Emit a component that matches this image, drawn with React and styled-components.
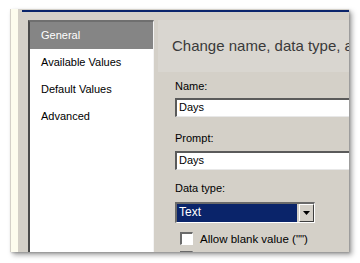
import styled, { createGlobalStyle } from 'styled-components';

const Global = createGlobalStyle`
  html, body {
    margin: 0;
    padding: 0;
    background: #ffffff;
  }
  body {
    font-family: "Liberation Sans", Arial, sans-serif;
    font-size: 11px;
  }
`;

function App() {
  return (
    <>
      <Global />
      <Page>
        <Shot>
          <Edge />
          <Strip />
          <Gap />
          <Dialog>
            <TitleLine />
            <Body>
              <List>
                <Item $selected>General</Item>
                <Item>Available Values</Item>
                <Item>Default Values</Item>
                <Item>Advanced</Item>
              </List>
              <Panel>
                <Header>Change name, data type, and other options.</Header>
                <Label $top={8}>Name:</Label>
                <Input $top={5}>Days</Input>
                <Label $top={15}>Prompt:</Label>
                <Input $top={6}>Days</Input>
                <Label $top={12}>Data type:</Label>
                <Select>
                  <SelectValue>Text</SelectValue>
                  <DropButton>
                    <svg width="7" height="4" viewBox="0 0 7 4">
                      <path d="M0 0h7L3.5 4z" fill="#000" />
                    </svg>
                  </DropButton>
                </Select>
                <Check $top={9}>
                  <Box />
                  <span>Allow blank value ("")</span>
                </Check>
                <Check $top={6}>
                  <Box />
                  <span>Allow null value</span>
                </Check>
              </Panel>
            </Body>
          </Dialog>
        </Shot>
      </Page>
    </>
  );
}

const Page = styled.div`
  padding: 9px 0 0 10px;
  width: 360px;
  height: 263px;
  box-sizing: border-box;
`;

const Shot = styled.div`
  display: flex;
  width: 339px;
  height: 243px;
  background: #d4d0c8;
  overflow: hidden;
  box-shadow: 3px 3px 5px rgba(0, 0, 0, 0.35), 1px 1px 2px rgba(0, 0, 0, 0.2);
`;

const Edge = styled.div`
  width: 1px;
  background: #d4d0c8;
`;

const Strip = styled.div`
  width: 7px;
  background: #fdfcee;
`;

const Gap = styled.div`
  width: 4px;
  background: #d4d0c8;
`;

const Dialog = styled.div`
  flex: 1;
  display: flex;
  flex-direction: column;
  min-width: 0;
`;

const TitleLine = styled.div`
  height: 2px;
  margin-top: 1px;
  background: #0a246a;
`;

const Body = styled.div`
  flex: 1;
  display: flex;
  padding: 8px 0 0 6px;
  min-height: 0;
`;

const List = styled.div`
  width: 123px;
  flex-shrink: 0;
  background: #ffffff;
  border-top: 2px solid #6f6f6f;
  border-left: 2px solid #4a4a4a;
  border-right: 1px solid #f4f4f4;
`;

const Item = styled.div`
  height: 27px;
  line-height: 26px;
  padding-left: 11px;
  color: ${(p) => (p.$selected ? '#ffffff' : '#000000')};
  background: ${(p) => (p.$selected ? '#858585' : 'transparent')};
  white-space: nowrap;
`;

const Panel = styled.div`
  flex: 1;
  display: flex;
  flex-direction: column;
  padding-left: 4px;
  min-width: 0;
  overflow: hidden;
`;

const Header = styled.div`
  height: 55px;
  line-height: 52px;
  padding-left: 14px;
  background: #d9d6d0;
  font-size: 15px;
  color: #3a3a3a;
  white-space: nowrap;
`;

const Label = styled.div`
  margin: ${(p) => p.$top}px 0 0 17px;
  line-height: 13px;
  color: #000000;
`;

const Input = styled.div`
  margin: ${(p) => p.$top}px 0 0 17px;
  width: 220px;
  height: 19px;
  box-sizing: border-box;
  padding-left: 2px;
  line-height: 15px;
  background: #ffffff;
  border-top: 2px solid #5a5a5a;
  border-left: 2px solid #5a5a5a;
  border-bottom: 1px solid #e8e8e8;
  color: #000000;
  flex-shrink: 0;
`;

const Select = styled.div`
  margin: 7px 0 0 17px;
  width: 140px;
  height: 21px;
  box-sizing: border-box;
  display: flex;
  border-top: 2px solid #6a6a6a;
  border-left: 2px solid #6a6a6a;
  border-bottom: 1px solid #ffffff;
  border-right: 1px solid #ffffff;
  flex-shrink: 0;
`;

const SelectValue = styled.div`
  flex: 1;
  background: #0a246a;
  color: #ffffff;
  padding-left: 2px;
  line-height: 17px;
  font-size: 12px;
  border-right: 2px solid #d4d0c8;
`;

const DropButton = styled.div`
  width: 15px;
  display: flex;
  align-items: center;
  justify-content: center;
  background: #d4d0c8;
  box-sizing: border-box;
  border-top: 1px solid #ffffff;
  border-left: 1px solid #ffffff;
  border-right: 1px solid #404040;
  border-bottom: 1px solid #404040;
`;

const Check = styled.div`
  margin: ${(p) => p.$top}px 0 0 22px;
  display: flex;
  align-items: center;
  gap: 7px;
  height: 13px;
  font-size: 11.5px;
  color: #000000;
  white-space: nowrap;
  flex-shrink: 0;
`;

const Box = styled.div`
  width: 13px;
  height: 13px;
  box-sizing: border-box;
  background: #ffffff;
  border-top: 2px solid #6a6a6a;
  border-left: 2px solid #6a6a6a;
  border-bottom: 1px solid #ffffff;
  border-right: 1px solid #ffffff;
  flex-shrink: 0;
`;

export default App;
